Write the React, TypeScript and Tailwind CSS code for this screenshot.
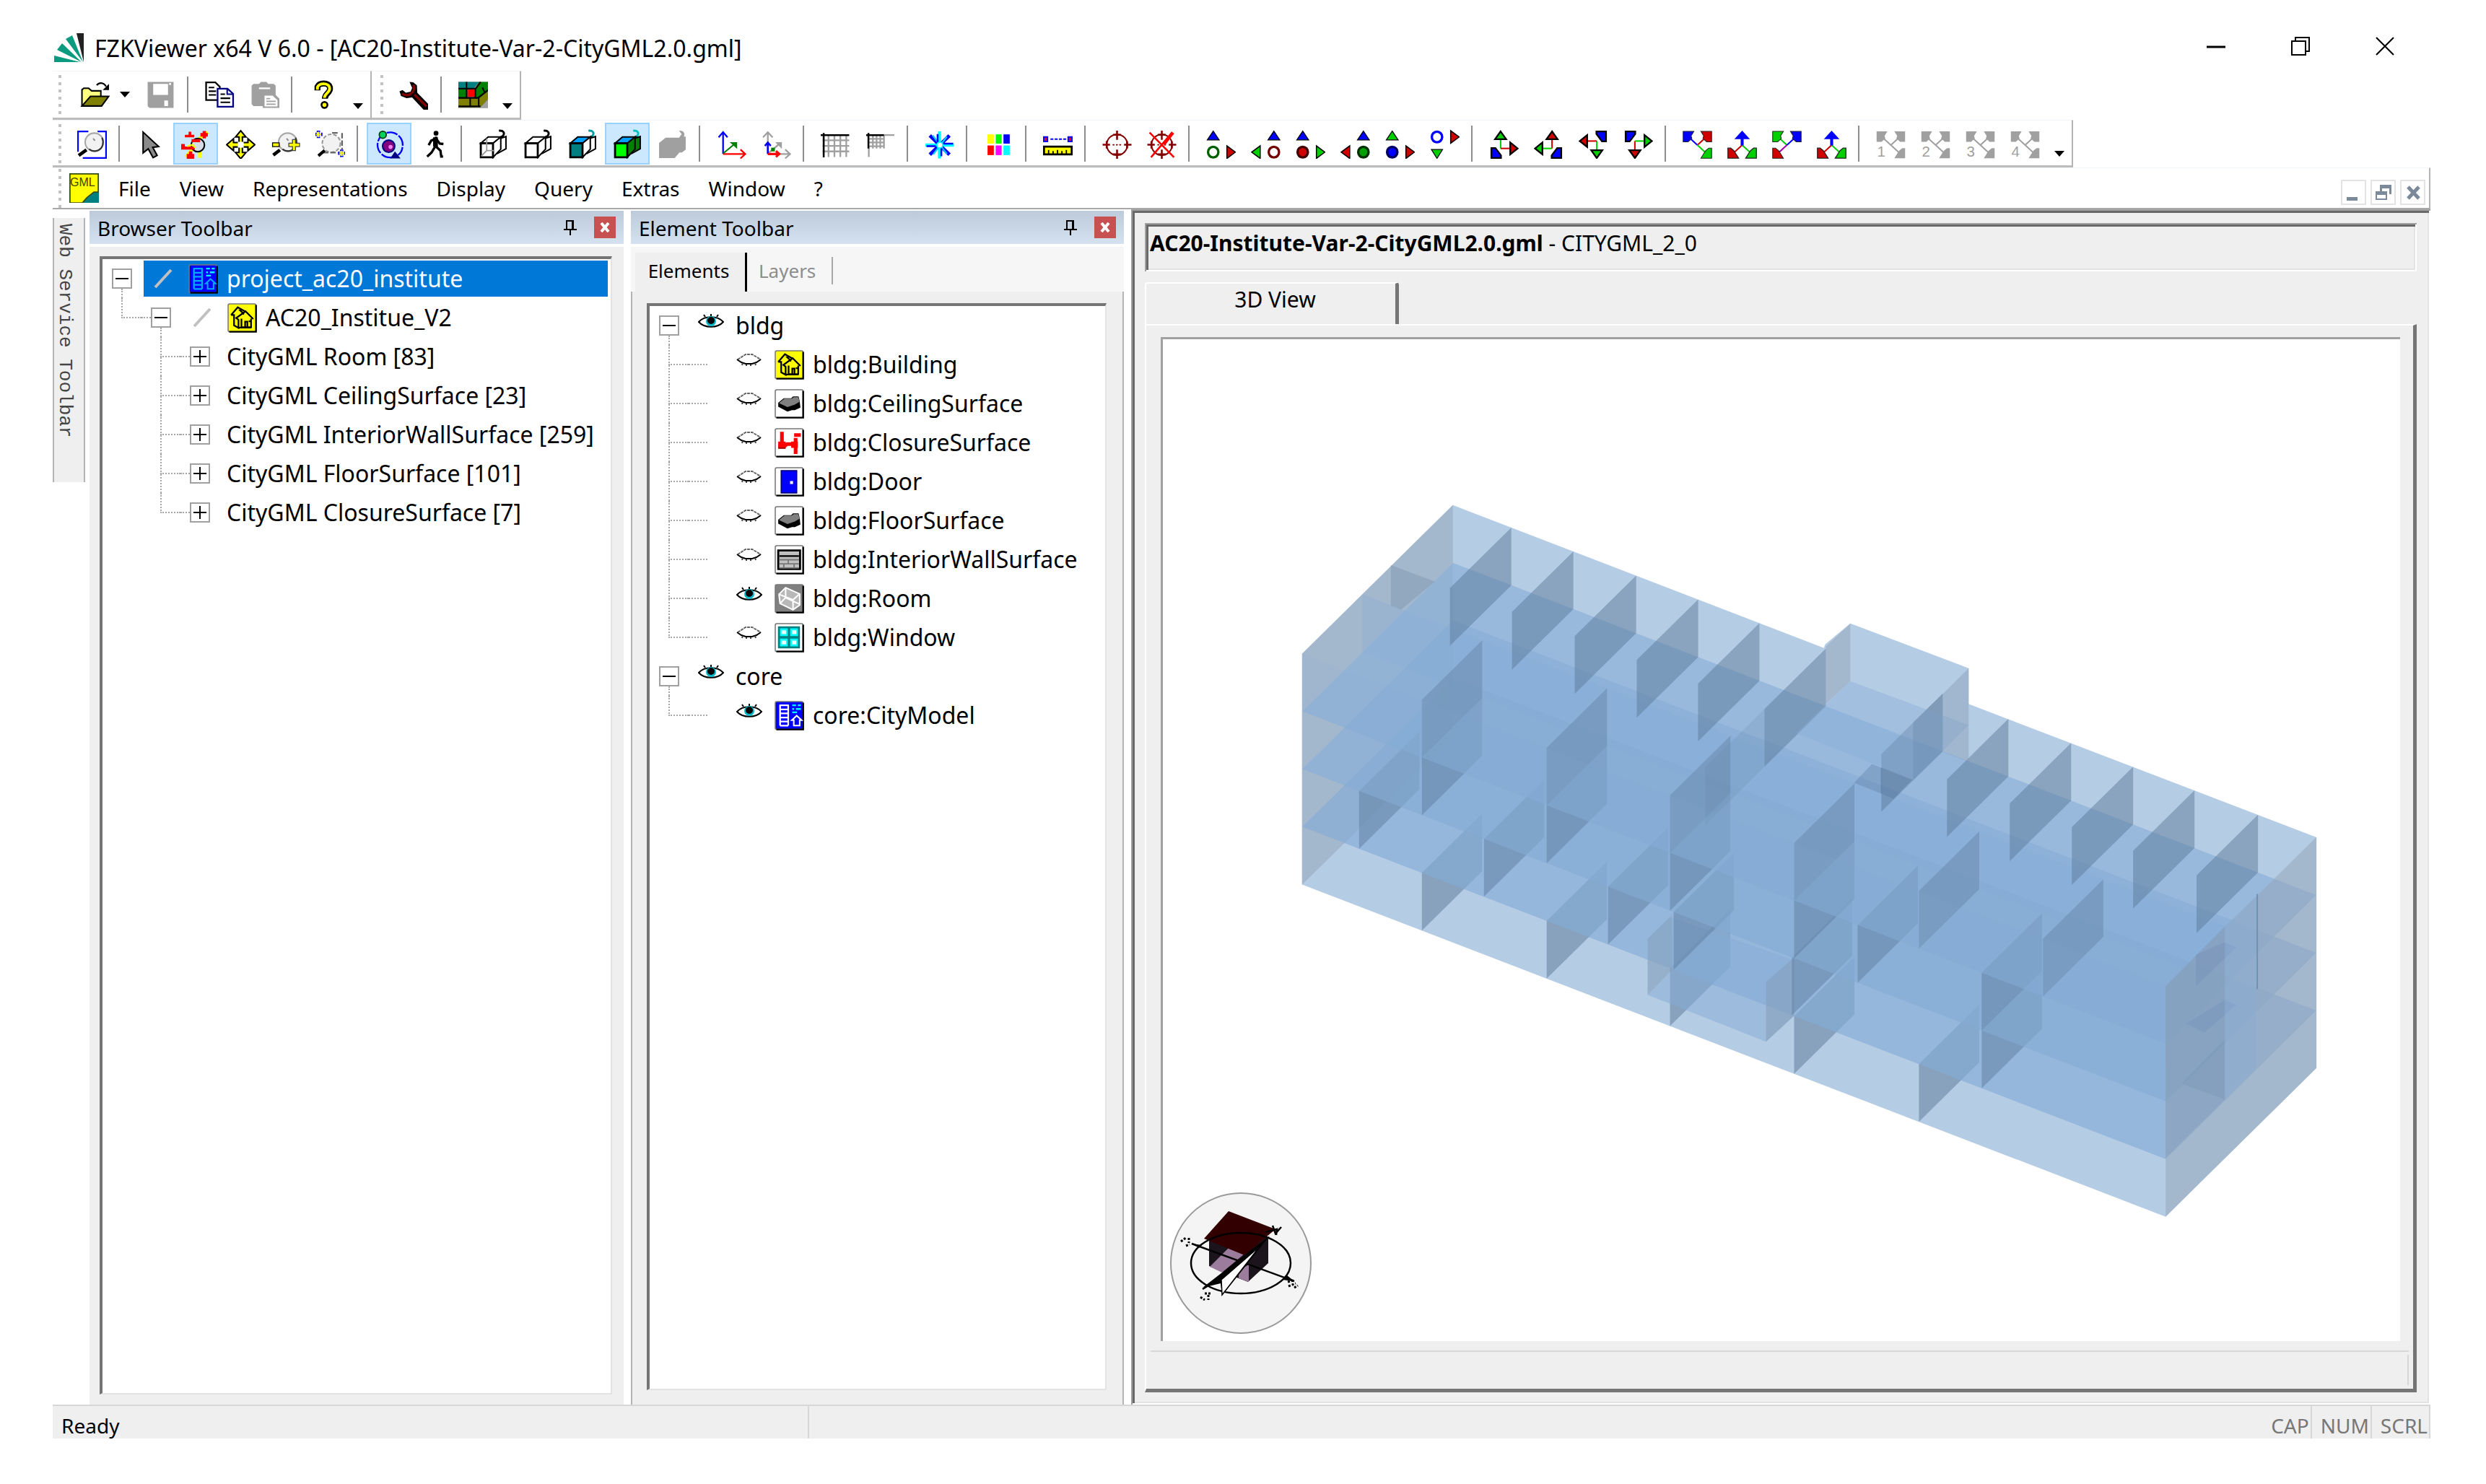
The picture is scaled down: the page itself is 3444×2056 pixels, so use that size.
import type { ReactNode } from "react";

const INK = "#000";
const GRAY = "#a0a0a0";

function Icon({ children }: { children: ReactNode }) {
  return (
    <svg width="41" height="41" viewBox="0 0 16 16" className="shrink-0" aria-hidden="true">
      {children}
    </svg>
  );
}

/* ---------- toolbar glyphs ---------- */

const openIcon = (
  <Icon>
    <path d="M1 14V5.2L2 4.4h2.6l1.6 1.4h5v3" fill="#ffff80" stroke={INK} strokeWidth="0.8" />
    <path d="M1 14l4.6-5.2h9.8L11.6 14z" fill="#808000" stroke={INK} strokeWidth="0.8" />
    <path d="M9 2.8C10 1.2 12.6 1 14 3.4" fill="none" stroke={INK} strokeWidth="0.9" />
    <path d="M15.6 2v3.4h-3.4z" fill={INK} />
  </Icon>
);
const saveIcon = (
  <Icon>
    <path d="M1 1h14v14H2l-1-1z" fill={GRAY} />
    <path d="M4 2h8v6H4zM12.6 1.6h1v1h-1zM10 11h2v3h-2z" fill="#fff" />
  </Icon>
);
const copyIcon = (
  <Icon>
    <path d="M.6 1.2h5L8 3.6v7.2H.6z" fill="#fff" stroke={INK} strokeWidth="0.9" />
    <path d="M2 4h3M2 6h4M2 8h4" stroke={INK} strokeWidth="0.8" />
    <path d="M6.8 4.6h5.4l3 2.8v7H6.8z" fill="#fff" stroke="#000080" strokeWidth="0.9" />
    <path d="M12 4.6v3h3" fill="none" stroke="#000080" strokeWidth="0.8" />
    <path d="M8.4 7.6h2.4M8.4 9.8h5.2M8.4 12h5.2" stroke={INK} strokeWidth="0.8" />
  </Icon>
);
const pasteIcon = (
  <Icon>
    <path d="M1 3l1-1h3l1-1h3l1 1h3l1 1v5l2 2v5H7v-1H2l-1-1z" fill={GRAY} />
    <path d="M5 4h6v.9H5zM8 8.4h4.4l2.6 2.4v3.4H8z" fill="#fff" />
    <path d="M9 10h2M9 11.5h5M9 13h5" stroke={GRAY} strokeWidth="0.7" />
  </Icon>
);
const helpIcon = (
  <Icon>
    <path d="M4.6 5.6V3.6C5.2 2.2 6.6 1.8 8 1.8s3.4.6 3.4 2.8c0 2.4-2.8 2.6-2.8 5.4" fill="none" stroke={INK} strokeWidth="3.2" />
    <path d="M4.6 5.2V3.8C5.2 2.4 6.6 2 8 2s3.2.6 3.2 2.6c0 2.4-2.8 2.6-2.8 5" fill="none" stroke="#ff0" strokeWidth="1.5" />
    <circle cx="8.4" cy="13.4" r="1.6" fill="#ff0" stroke={INK} strokeWidth="1" />
  </Icon>
);
const wrenchIcon = (
  <Icon>
    <path d="M5.6 1l2 .2 2 1.6.2 4 5.8 6V16h-2.4L7 9.4l-3 .4-3-1.2L.2 6l1.6-.6 1.8 1.4 2.6-.6.8-2z" fill={INK} />
    <path d="M8.2 7.8l6.6 6.4M1.6 7.2c1.2 1 2.8 1.2 4.4.4l1.4-1.2c.8-1.4.8-2.8.2-3.8" fill="none" stroke="#800000" strokeWidth="1.3" />
  </Icon>
);
const bricksIcon = (
  <Icon>
    <path d="M0 1h16v14H0z" fill="#808080" />
    <path d="M0 1h11l-3 4H0z" fill="#008080" />
    <path d="M11 1h5v5l-5 5-2-1V5z" fill="#008000" />
    <path d="M0 5h5v5H0z" fill="#008000" />
    <path d="M5.2 5h3.6v4H5.2z" fill="#f00" />
    <path d="M0 10h11l5-4v4l-4 4.6H0z" fill="#808000" />
    <path d="M0 4.6h9.4L12 1M4.4 1v9M9.2 4.6v5M0 9.6h10.6L16 5.4M6.4 10v4.4M11 9.6v4.8M0 14.2h12M13 4l1.4 3" fill="none" stroke={INK} strokeWidth="0.8" />
    <path d="M16 10.6V15h-4.4z" fill="#a0a0a0" />
  </Icon>
);

const lens = (
  <>
    <circle cx="9.2" cy="7" r="4.9" fill="#f2f2f2" stroke="#a8a8a8" strokeWidth="0.8" />
    <path d="M13.4 4.6c1.2 2.6.4 5.6-2 6.8-1.8.8-3.4.6-5-.6" fill="none" stroke="#333" strokeWidth="0.8" />
    <path d="M8.6 5l1 1.2" stroke="#888" strokeWidth="0.7" />
  </>
);
const fitIcon = (
  <Icon>
    <path d="M6 1.2H.4v11M11 1.2h4.6v14.4H3" fill="none" stroke="#00f" strokeWidth="0.9" />
    {lens}
    <path d="M5 11.2L.8 14.2" stroke={INK} strokeWidth="1.8" />
  </Icon>
);
const pointerIcon = (
  <Icon>
    <path d="M3.6 1.6v11.2l2.8-2.2 2.6 4.8 2.2-1.2-2.4-4.4 3.2-.4z" fill="#8a8a8a" stroke={INK} strokeWidth="0.8" />
  </Icon>
);
const moveLensIcon = (
  <Icon>
    <path d="M9 5.6l5.4-4M2.6 15l4-5M10 12v3.4" stroke="#ff0" strokeWidth="1.8" />
    <circle cx="9" cy="8.6" r="3.6" fill="#d4dde6" stroke={INK} strokeWidth="0.8" />
    <path d="M2 3h5v1.4H2zM4 1.4h1.4v3H4zM10.4 2h4v2h-4zM11.6 1h1.8v4h-1.8zM5.6 5.4h4.6V7H5.6zM0 8h2v3H0zM1.4 9.4h6V11h-6zM3 13.4h4V16H3zM4.2 12H6v2H4.2z" fill="#f00" />
    <path d="M3.2 9.2l3-.8 1.4 1.6" fill="none" stroke="#ff0" strokeWidth="0.9" />
  </Icon>
);
const panIcon = (
  <Icon>
    <path d="M8 .8l2.8 3.4H8.9v3h3v-2L15.6 8.4l-3.7 3.2v-2h-3v3h1.9L8 16l-2.8-3.4h1.9v-3h-3v2L.4 8.4l3.7-3.2v2h3v-3H5.2z" fill="#ff0" stroke={INK} strokeWidth="0.8" />
    <path d="M6.4 6.8h3.2V10H6.4z" fill="#fff" />
  </Icon>
);
const zoomIcon = (
  <Icon>
    {lens}
    <path d="M5 11.2L1.4 14" stroke={INK} strokeWidth="1.8" />
    <path d="M1 7.4h3.6v2H1z" fill="#ff0" stroke={INK} strokeWidth="0.5" />
    <path d="M11.8 5.6h1.6v2h2.2v1.8h-2.2v2.2h-1.6V9.4H9.8V7.6h2z" fill="#ff0" stroke="#444" strokeWidth="0.5" />
  </Icon>
);
const zoomWindowIcon = (
  <Icon>
    <circle cx="8.6" cy="7.6" r="4.9" fill="#f2f2f2" stroke="#999" strokeWidth="0.8" strokeDasharray="2 1" />
    <path d="M9 2h4M14.4 2v9M4 12.6h8" stroke="#666" strokeWidth="0.9" strokeDasharray="3 1" />
    <path d="M5 11.4L1.6 14.4" stroke={INK} strokeWidth="1.6" />
    <path d="M1.6.8v4M-.2 2.8h4M14.2 11v4M12.2 13h4" stroke="#00f" strokeWidth="1.8" strokeDasharray="0.9 0.7" />
    <path d="M1.6 1.4v2.8M.4 2.8H3M14.2 11.6v2.8M13 13h2.6" stroke="#ff0" strokeWidth="0.8" />
  </Icon>
);
const orbitIcon = (
  <Icon>
    <path d="M9.4 15.2A6.8 6.8 0 1 1 15 10c-.2 2-1 3-2.4 4" fill="none" stroke="#00f" strokeWidth="0.9" strokeDasharray="6 0.8" />
    <circle cx="7.6" cy="9.2" r="3.3" fill="#800080" stroke="#000080" strokeWidth="0.8" />
    <circle cx="8.6" cy="9.6" r="1.1" fill="#f080f0" />
    <circle cx="4.4" cy="3" r="1.9" fill="#00d060" stroke="#004000" strokeWidth="0.7" />
    <path d="M11 12l3 3.8H8.4z" fill="#000080" />
  </Icon>
);
const walkIcon = (
  <Icon>
    <circle cx="9" cy="2.2" r="1.3" fill={INK} />
    <path d="M9 4v5.4l2.4 2.2.4 3.2h1M8.6 9.2l-2 3.4-2.4 2.2M5 8.6l1.4-2.4L9 5l2 2.8 2 .2" fill="none" stroke={INK} strokeWidth="1.3" />
    <path d="M7.4 4.4h2.6v5H7.4z" fill={INK} />
  </Icon>
);

function Cube({ front, top, side, far, wire }: { front: string; top: string; side: string; far: string; wire?: boolean }) {
  return (
    <Icon>
      <path d="M11 .8c2.4-.2 3.4 1.2 2.2 2.8l-1 .8" fill="none" stroke={far} strokeWidth="1.1" />
      <path d="M10.4 5.4l4.4-1.4v6.6L10.4 13z" fill={side} stroke={INK} strokeWidth="0.8" />
      <path d="M1.2 7.6l4-3.4h7L7.8 7.6z" fill={top} stroke={INK} strokeWidth="0.8" />
      <path d="M7.8 7.6l4.2-3.4v6.6l-4.2 4.4z" fill={side} stroke={INK} strokeWidth="0.8" />
      <path d="M1.2 7.6h6.6v7.6H1.2z" fill={front} stroke={INK} strokeWidth="1.1" />
      {wire && <path d="M4.4 5v6.6h4M4.4 11.6l-3 3" fill="none" stroke="#999" strokeWidth="0.7" />}
    </Icon>
  );
}
const solidCubeIcon = (
  <Icon>
    <path d="M11.6.8c2.6-.2 3.4 1.6 2.6 3.2h1v7l-2 1.6h-1.4l-2.6 3H.8V7.4L4.4 4.6h7.2l1.4-2z" fill={GRAY} />
  </Icon>
);

const axesIcon = (
  <Icon>
    <path d="M3.4 13.4V2M1 4.4l2.4-2.8 2.4 2.8" fill="none" stroke="#00f" strokeWidth="0.9" />
    <path d="M3.4 13.4h12M12.8 11l2.6 2.4-2.6 2.4" fill="none" stroke="#f00" strokeWidth="0.9" />
    <path d="M3.6 13l6-5" stroke="#008000" strokeWidth="0.8" />
    <path d="M7 7h4v3.6z" fill="#008000" />
  </Icon>
);
const axesGrayIcon = (
  <Icon>
    <path d="M3.4 13.4V2M.8 4.4l2.6-2.8L6 4.4M3.4 13.4h12M12.8 11l2.6 2.4-2.6 2.4M3.6 13l6-5" fill="none" stroke={GRAY} strokeWidth="0.9" />
    <path d="M7.4 7h3.6v3.6z" fill={GRAY} />
    <path d="M3.4 13.4V7M1.8 9l1.6-1.8L5 9" fill="none" stroke="#00f" strokeWidth="1" />
    <path d="M3.4 13.4h6.4M7.8 11.8l1.8 1.6-1.8 1.6" fill="none" stroke="#f00" strokeWidth="1.2" />
    <path d="M5.2 10h2v2h-2z" fill="#008000" />
  </Icon>
);
const gridIcon = (
  <Icon>
    <path d="M4.2 3v12M7.4 3v12M10.6 3v12M13.8 3v12M1 6h14.4M1 9h14.4M1 12h14.4" stroke={GRAY} strokeWidth="0.9" />
    <path d="M0 3.2h15.4M1.6 2v13.2" stroke={INK} strokeWidth="1" />
  </Icon>
);
const gridCornerIcon = (
  <Icon>
    <path d="M4 3v7.4M6 3v7.4M8 3v7.4M10 3v7.4M1.6 5.2h8.6M1.6 7.2h8.6M1.6 9.2h8.6M1.8 10v5M10 3.2h5.6" stroke={GRAY} strokeWidth="0.9" />
    <path d="M.4 3.2H10M1.6 2v8.4" stroke={INK} strokeWidth="1" />
  </Icon>
);
const starIcon = (
  <Icon>
    <path d="M8 1.2v14.6M.4 8.6h15.4" stroke="#0ff" strokeWidth="1.7" />
    <path d="M2.8 3.4l10.6 10.4M13.4 3.4L2.8 13.8" stroke="#00f" strokeWidth="1.9" />
    <path d="M4.4 3.4l7.6 10M12 4L4.6 13.6" stroke="#0cf" strokeWidth="0.9" />
    <path d="M7 2.6v4.6M9 10v4.6M1 9.2h5M10 7.8h5.4" stroke="#00f" strokeWidth="1" />
    <circle cx="8.2" cy="8.6" r="1.6" fill="#fff" stroke="#0ff" strokeWidth="0.7" />
  </Icon>
);
const paletteIcon = (
  <Icon>
    <path d="M2 2.8h3.4v5H2z" fill="#ff0" />
    <path d="M6.4 2.8h3.2v5H6.4z" fill="#0f0" />
    <path d="M10.6 2.8H14v5h-3.4z" fill="#00f" />
    <path d="M2 8.8h3.4V14H2z" fill="#f00" />
    <path d="M6.4 8.8h3.2V14H6.4z" fill="#f0f" />
    <path d="M10.6 8.8H14V14h-3.4z" fill="#0ff" />
  </Icon>
);
const measureIcon = (
  <Icon>
    <path d="M.4 4.2h2v2.4h-2zM13.6 4.2h2v2.4h-2z" fill="#f00" stroke="#00f" strokeWidth="0.8" />
    <path d="M4 5.4h9" stroke="#00f" strokeWidth="0.8" strokeDasharray="1.6 0.7" />
    <path d="M.5 9.4h15v4.2H.5z" fill="#ff0" stroke={INK} strokeWidth="1.1" />
    <path d="M3 13.4v-2.2M5.4 13.4v-1.6M7.8 13.4v-2.2M10.2 13.4v-1.6M12.6 13.4v-2.2" stroke={INK} strokeWidth="0.7" />
  </Icon>
);
const target = (
  <>
    <circle cx="8" cy="8.4" r="5.6" fill="none" stroke="#800000" strokeWidth="0.8" />
    <path d="M8 .8v5M8 11v5M5.8 3h4.4M5.8 13.6h4.4M.2 8.4h4M11.8 8.4h4M2.4 6.4v4M13.4 6.4v4" stroke="#800000" strokeWidth="1" />
    <path d="M5.6 8.4h5" stroke="#800000" strokeWidth="0.7" strokeDasharray="1 0.8" />
  </>
);
const targetIcon = <Icon>{target}</Icon>;
const targetOffIcon = (
  <Icon>
    {target}
    <path d="M1.4 1.8l13.2 13.4M13.6 1.8L2.2 15.2" stroke="#f00" strokeWidth="1" />
    <path d="M14 1.8L9 8.2" stroke="#f00" strokeWidth="1.8" />
  </Icon>
);

const GREEN = "#00d000";
const RED = "#d00000";
const BLUE = "#0000ff";

function Dots({ x, y, fill, ring, tipColor, flip }: { x: number; y: string; fill: string; ring: string; tipColor: string; flip?: boolean }) {
  return (
    <Icon>
      <path d={`M${x} 1l3.2 4.8h-6.4z`} fill={y} stroke={INK} strokeWidth="0.5" />
      <ellipse cx={x} cy="12.4" rx="2.8" ry="2.9" fill={fill} stroke={ring} strokeWidth="1.3" />
      <path d={flip ? "M5 9v6.8L.4 12.4z" : "M11.2 9v6.8l4.6-3.4z"} fill={tipColor} stroke={INK} strokeWidth="0.6" />
    </Icon>
  );
}

const viewDownIcon = (
  <Icon>
    <ellipse cx="3.8" cy="4.2" rx="2.8" ry="2.9" fill="#fff" stroke={BLUE} strokeWidth="1.3" />
    <path d="M11.2.8v6.8l4.6-3.4z" fill={RED} stroke={INK} strokeWidth="0.6" />
    <path d="M3.8 15.8L.8 11h6z" fill={GREEN} stroke={INK} strokeWidth="0.5" />
  </Icon>
);

function Tripod({ up, side, turn }: { up: string; side: string; turn?: string }) {
  return (
    <Icon>
      <g transform={turn}>
        <path d="M6.2 5v5.4" stroke={up} strokeWidth="0.8" />
        <path d="M6.2 10.4h5.4" stroke={side} strokeWidth="0.8" />
        <path d="M6.2 1.2l3 4.2h-6z" fill={up} stroke={INK} strokeWidth="0.9" />
        <path d="M11.4 7.2v6.4l4-3.2z" fill={side} stroke={INK} strokeWidth="0.9" />
        <path d="M1.2 10.2h2.2l3 4v1.4H1.2z" fill={BLUE} stroke={INK} strokeWidth="0.9" />
      </g>
    </Icon>
  );
}

const NW = "M.3 1.2h5.8L4.6 3.6 5 5 3 6.8H.3z";
const NE = "M15.7 1.2H9.9l1.5 2.4L11 5l2 1.8h2.7z";
const SE = "M15.7 15.7H9.9l1.5-2.4 1.2-1.8 1.6-1.3h1.5z";
const SW = "M.3 15.7h5.8l-1.5-2.4-1.2-1.8-1.6-1.3H.3z";

function Corners({ nw, ne, se, sw }: { nw?: string; ne?: string; se?: string; sw?: string }) {
  return (
    <Icon>
      {nw && <path d="M3 4l5 4.6" stroke={nw} strokeWidth="0.8" />}
      {ne && <path d="M13 4L8 8.6" stroke={ne} strokeWidth="0.8" />}
      {se && <path d="M8 8.6l5 4.6" stroke={se} strokeWidth="0.8" />}
      {sw && <path d="M8 8.6l-5 4.6" stroke="#a000a0" strokeWidth="0.8" />}
      {nw && <path d={NW} fill={nw} stroke="#222" strokeWidth="0.4" />}
      {ne && <path d={NE} fill={ne} stroke="#222" strokeWidth="0.4" />}
      {se && <path d={SE} fill={se} stroke="#222" strokeWidth="0.4" />}
      {sw && <path d={SW} fill={sw} stroke="#222" strokeWidth="0.4" />}
    </Icon>
  );
}
const isoIcon = (
  <Icon>
    <path d="M8 8.6l-5 4.6" stroke={RED} strokeWidth="0.8" />
    <path d="M8 8.6l5 4.6" stroke={GREEN} strokeWidth="0.8" />
    <path d="M8 .8l4.2 4.6H8.8v3.4H7.2V5.4H3.8z" fill={BLUE} />
    <path d={SW} fill={RED} stroke="#222" strokeWidth="0.5" />
    <path d={SE} fill={GREEN} stroke="#222" strokeWidth="0.5" />
  </Icon>
);
function SavedView({ n }: { n: number }) {
  return (
    <Icon>
      <path d="M3 4l10 9.2M13 4L8 8.6" stroke={GRAY} strokeWidth="0.8" />
      <path d={NW} fill={GRAY} />
      <path d={NE} fill={GRAY} />
      <path d={SE} fill={GRAY} />
      <text x="0.6" y="15" fontSize="8" fill={GRAY} fontFamily="Liberation Sans, sans-serif">
        {n}
      </text>
    </Icon>
  );
}

type Tool = { label: string; icon: ReactNode; on?: boolean };

const viewGroups: Tool[][] = [
  [{ label: "Zoom all", icon: fitIcon }],
  [
    { label: "Select", icon: pointerIcon },
    { label: "Navigate", icon: moveLensIcon, on: true },
    { label: "Pan", icon: panIcon },
    { label: "Zoom", icon: zoomIcon },
    { label: "Zoom window", icon: zoomWindowIcon },
  ],
  [
    { label: "Orbit", icon: orbitIcon, on: true },
    { label: "Walk", icon: walkIcon },
  ],
  [
    { label: "Wireframe", icon: <Cube front="#fff" top="#fff" side="#fff" far="#000" wire /> },
    { label: "Hidden line", icon: <Cube front="#fff" top="#fff" side="#fff" far="#000" /> },
    { label: "Shaded edges", icon: <Cube front="#008080" top="#00a0ff" side="#fff" far="#00a0a0" /> },
    { label: "Shaded", icon: <Cube front="#00ff00" top="#00a0ff" side="#008000" far="#00c0c0" />, on: true },
    { label: "Solid", icon: solidCubeIcon },
  ],
  [
    { label: "Axes", icon: axesIcon },
    { label: "Local axes", icon: axesGrayIcon },
  ],
  [
    { label: "Grid", icon: gridIcon },
    { label: "Local grid", icon: gridCornerIcon },
  ],
  [{ label: "North", icon: starIcon }],
  [{ label: "Colors", icon: paletteIcon }],
  [{ label: "Measure", icon: measureIcon }],
  [
    { label: "Set target", icon: targetIcon },
    { label: "Clear target", icon: targetOffIcon },
  ],
  [
    { label: "Front", icon: <Dots x={3.8} y={BLUE} fill="#fff" ring="#006000" tipColor={RED} /> },
    { label: "Right", icon: <Dots x={12.4} y={BLUE} fill="#fff" ring="#700000" tipColor={GREEN} flip /> },
    { label: "Left", icon: <Dots x={3.8} y={BLUE} fill={RED} ring="#400000" tipColor={GREEN} /> },
    { label: "Back", icon: <Dots x={12.4} y={BLUE} fill="#00a000" ring="#003000" tipColor={RED} flip /> },
    { label: "Top", icon: <Dots x={3.8} y={GREEN} fill={BLUE} ring="#000060" tipColor={RED} /> },
    { label: "Bottom", icon: viewDownIcon },
  ],
  [
    { label: "South west", icon: <Tripod up={GREEN} side={RED} /> },
    { label: "South east", icon: <Tripod up={RED} side={GREEN} turn="matrix(-1 0 0 1 16 0)" /> },
    { label: "North east", icon: <Tripod up={GREEN} side={RED} turn="rotate(180 8 8.4)" /> },
    { label: "North west", icon: <Tripod up={RED} side={GREEN} turn="matrix(1 0 0 -1 0 16.8)" /> },
  ],
  [
    { label: "Isometric 1", icon: <Corners nw={BLUE} ne={RED} se={GREEN} /> },
    { label: "Isometric 2", icon: isoIcon },
    { label: "Isometric 3", icon: <Corners nw={GREEN} ne={BLUE} sw={RED} /> },
    { label: "Isometric 4", icon: isoIcon },
  ],
  [1, 2, 3, 4].map((n) => ({ label: `Saved view ${n}`, icon: <SavedView n={n} /> })),
];

function Grip() {
  return (
    <span className="ml-2 flex h-full w-1 flex-col justify-center gap-[6px]">
      {[0, 1, 2, 3, 4, 5].map((i) => (
        <span key={i} className="h-1 w-1 bg-[#c3c3c3]" />
      ))}
    </span>
  );
}

function ToolButton({ tool }: { tool: Tool }) {
  const state = tool.on ? "border-2 border-[#99d1ff] bg-[#cce8ff]" : "";
  return (
    <button aria-label={tool.label} className={`flex h-[58px] w-[62px] shrink-0 items-center justify-center ${state}`}>
      {tool.icon}
    </button>
  );
}

function Separator() {
  return <span className="mr-3 ml-[6px] h-[50px] w-[2px] shrink-0 bg-[#8d8d8d]" />;
}

function Arrow() {
  return (
    <svg width="14" height="8" viewBox="0 0 14 8" aria-hidden="true">
      <path d="M0 0h14L7 8z" fill={INK} />
    </svg>
  );
}

function More({ label }: { label: string }) {
  return (
    <button aria-label={label} className="flex h-full items-end pr-[10px] pb-3 pl-[10px]">
      <Arrow />
    </button>
  );
}

/* ---------- tree glyphs ---------- */

function Tile({ bg, children }: { bg: string; children: ReactNode }) {
  return (
    <Icon>
      <rect x="0.4" y="0.4" width="15" height="15" rx="0.8" fill={bg} stroke="#777" strokeWidth="0.6" />
      <path d="M1 15.5h14.5V1" fill="none" stroke={INK} strokeWidth="0.9" />
      {children}
    </Icon>
  );
}
const houseTile = (
  <Tile bg="#ff0">
    <path d="M2 6.4l3.6-4.2 3.8 2.2M2 6.4h1.6V12L6 13.4V9l-1.2-1L9.8 4.4 14 8.6M7.6 8.4V13h5.2V8.4M5.4 13.2h7.4M9.6 13v-3h1.2v3M12 9.4v.8M6.2 3.2L9 6" fill="none" stroke={INK} strokeWidth="0.9" />
  </Tile>
);
const slabTile = (
  <Tile bg="#fff">
    <path d="M2 7.4l3-2.4h4l1-1h3l.6 2.4.4 3.6-3 1.4H9.4l-2.4.8L2 9.6z" fill={INK} />
    <path d="M2.4 7.6l3-2.4h4l1-.8h2.4l.8 2.4L11 8.4 7 9.8z" fill="#808080" />
  </Tile>
);
const closureTile = (
  <Tile bg="#fff">
    <path d="M4 2v7.4M2 9.6h3.6l1.2-.9h4.4M11.4 14V5.4M10.6 3.8h3.6" fill="none" stroke="#f00" strokeWidth="2" />
    <path d="M2 9h4M9 9h3.6" stroke="#f00" strokeWidth="3.4" />
    <path d="M2 10.9h4" stroke="#900" strokeWidth="0.7" />
  </Tile>
);
const doorTile = (
  <Tile bg="#fff">
    <path d="M3.6 2h8.4v12H3.6z" fill="#00f" stroke="#000080" strokeWidth="0.6" />
    <path d="M8.4 7.6H10v1.6H8.4z" fill="#fff" />
  </Tile>
);
const wallTile = (
  <Tile bg="#fff">
    <path d="M2 3h11.8v10H2z" fill="#c0c0c0" stroke={INK} strokeWidth="1.1" />
    <path d="M2.6 6h10.6" stroke={INK} strokeWidth="0.9" />
    <path d="M2.6 8h10.6M2.6 10.2h10.6M7.4 8v2.2M5 10.4v2M10.6 10.4v2M2.6 12.4h10.6" stroke="#777" strokeWidth="0.7" />
  </Tile>
);
const roomTile = (
  <Tile bg="#808080">
    <path d="M2.4 5.6L6 2l7.6 3.4v6L10 14 3 10.6z" fill="#b8b8b8" stroke="#fff" strokeWidth="0.8" />
    <path d="M6 2v5.4L3 10.6M6 7.4l7.6 3.6M2.4 5.6l7.6 3V14M10 8.6l3.6-3.2" fill="none" stroke="#fff" strokeWidth="0.8" />
  </Tile>
);
const windowTile = (
  <Tile bg="#fff">
    <path d="M2.4 2.4h10.8v10.8H2.4z" fill="#0ff" stroke="#008080" strokeWidth="1.1" />
    <path d="M7.8 2.4v10.8M2.4 7.8h10.8" stroke="#008080" strokeWidth="1.3" />
    <path d="M3.8 4h2.4v2H3.8zM9.4 4h2.4v2H9.4zM3.8 9.6h2.4v2H3.8zM9.4 9.6h2.4v2H9.4z" fill="#e8ffff" />
  </Tile>
);
function CityTile({ line }: { line: string }) {
  return (
    <Tile bg="#00f">
      <path d="M3 2v11.4M7.4 2v11.4M3 2.4h4.4M3 4.6h4.4M3 6.8h4.4M3 9h4.4M3 11.2h4.4M3 13.4h4.4" fill="none" stroke={line} strokeWidth="0.9" />
      <path d="M9.6 2.4h2M12.6 2.4h1.6M9.6 4.4h1M11.6 4.4h2.6M9.6 6.2h2.6" stroke="#0ff" strokeWidth="0.9" />
      <path d="M12 8l2.6 2.4h-1v3h-3.2v-3h-1z" fill="none" stroke={line} strokeWidth="0.8" />
    </Tile>
  );
}

function Eye({ open }: { open?: boolean }) {
  return (
    <button aria-label={open ? "Hide" : "Show"} className="mb-3 h-5 w-[36px] shrink-0">
      <svg width="36" height="20" viewBox="0 0 36 20" aria-hidden="true">
        {open ? (
          <>
            <path d="M1 11C9 2 27 2 35 11 27 20 9 20 1 11z" fill="#fff" stroke={INK} strokeWidth="2" />
            <circle cx="18" cy="10" r="7" fill="#00b8c8" />
            <circle cx="18" cy="9" r="5" fill={INK} />
            <path d="M10 4L8 1M18 3V0M26 4l2-3" stroke={INK} strokeWidth="2" />
          </>
        ) : (
          <>
            <path d="M2 9L13 2h9l12 7" fill="none" stroke="#666" strokeWidth="2" strokeDasharray="4 1" />
            <path d="M1 9l6 4 6 2h9l6-2 6-4" fill="none" stroke={INK} strokeWidth="2" />
            <path d="M9 14l-1 3M14 16v2M20 16v2M26 14l1 3" stroke="#444" strokeWidth="2" />
          </>
        )}
      </svg>
    </button>
  );
}

function Slash() {
  return (
    <svg width="26" height="28" viewBox="0 0 26 28" className="shrink-0" aria-hidden="true">
      <path d="M2 26L24 2" stroke="#c0c0c0" strokeWidth="4" />
    </svg>
  );
}

/* box with + or -, and the dotted lines that run into it */
function Toggle({ open, child, below }: { open?: boolean; child?: boolean; below?: boolean }) {
  return (
    <span className="flex h-[54px] w-[54px] shrink-0 items-center">
      <span className={`w-[13px] ${child ? "border-t-2 border-dotted border-[#a8a8a8]" : ""}`} />
      <span className="flex h-full flex-col items-center">
        <span className="h-[13px]" />
        <button
          aria-label={open ? "Collapse" : "Expand"}
          className="flex h-7 w-7 items-center justify-center border-2 border-[#a0a0a0] bg-white"
        >
          <svg width="18" height="18" viewBox="0 0 18 18" aria-hidden="true">
            <path d={open ? "M0 9h18" : "M0 9h18M9 0v18"} stroke={INK} strokeWidth="2" />
          </svg>
        </button>
        <span className={`h-[13px] ${below ? "border-l-2 border-dotted border-[#a8a8a8]" : ""}`} />
      </span>
    </span>
  );
}

function Branch({ last }: { last?: boolean }) {
  return (
    <span className="flex h-[54px] w-[54px] shrink-0">
      <span className="w-[26px]" />
      <span className="flex flex-1 flex-col">
        <span className="h-7 border-b-2 border-l-2 border-dotted border-[#a8a8a8]" />
        {!last && <span className="h-[26px] border-l-2 border-dotted border-[#a8a8a8]" />}
      </span>
    </span>
  );
}

const cityObjects = [
  "CityGML Room [83]",
  "CityGML CeilingSurface [23]",
  "CityGML InteriorWallSurface [259]",
  "CityGML FloorSurface [101]",
  "CityGML ClosureSurface [7]",
];

const bldgElements = [
  { name: "bldg:Building", tile: houseTile },
  { name: "bldg:CeilingSurface", tile: slabTile },
  { name: "bldg:ClosureSurface", tile: closureTile },
  { name: "bldg:Door", tile: doorTile },
  { name: "bldg:FloorSurface", tile: slabTile },
  { name: "bldg:InteriorWallSurface", tile: wallTile },
  { name: "bldg:Room", tile: roomTile, visible: true },
  { name: "bldg:Window", tile: windowTile },
];

function PanelHeader({ title }: { title: string }) {
  return (
    <div className="flex h-[46px] shrink-0 items-center bg-linear-to-b from-[#bccad9] to-[#d4e2f0] pr-[11px] pl-[11px]">
      <h2 className="flex-1 pt-[2px] text-[28px] leading-9">{title}</h2>
      <button aria-label="Pin" className="mr-6">
        <svg width="18" height="22" viewBox="0 0 18 22" aria-hidden="true">
          <path d="M4 14V2h9v12M0 14h18M9 14v8" fill="none" stroke={INK} strokeWidth="2" />
          <path d="M11 2h3v12h-3z" fill={INK} />
        </svg>
      </button>
      <button aria-label={`Close ${title}`} className="flex h-[30px] w-[30px] items-center justify-center bg-[#c75050]">
        <svg width="14" height="14" viewBox="0 0 14 14" aria-hidden="true">
          <path d="M2 1l10 12M12 1L2 13" stroke="#fff" strokeWidth="4" />
        </svg>
      </button>
    </div>
  );
}

const sunken = "border-t-4 border-l-4 border-r-2 border-b-2 border-t-[#757575] border-l-[#757575] border-r-[#e3e3e3] border-b-[#e3e3e3] bg-white";

function BrowserPanel() {
  return (
    <section className="flex w-[740px] shrink-0 flex-col pt-[2px]">
      <PanelHeader title="Browser Toolbar" />
      <div className="mt-1 flex flex-1 flex-col bg-[#efefef] pt-[13px] pr-4 pb-[14px] pl-[14px]">
        <ul className={`flex-1 text-[32px] leading-10 ${sunken}`}>
          <li className="flex h-[54px] items-center">
            <Toggle open below />
            <a href="#project" className="mr-1 ml-[3px] flex h-[50px] flex-1 items-center bg-[#0078d7] pl-[14px] text-white">
              <Slash />
              <span className="mr-3 ml-[22px]">
                <CityTile line="#0af" />
              </span>
              project_ac20_institute
            </a>
          </li>
          <li className="flex h-[54px] items-center">
            <Branch last />
            <Toggle open child below />
            <span className="flex items-center pl-[17px]">
              <Slash />
              <span className="mr-3 ml-[22px]">{houseTile}</span>
              AC20_Institue_V2
            </span>
          </li>
          {cityObjects.map((name, i) => (
            <li key={name} className="flex h-[54px] items-center">
              <span className="w-[54px] shrink-0" />
              <Branch last={i === cityObjects.length - 1} />
              <Toggle child />
              <span className="pl-[10px]">{name}</span>
            </li>
          ))}
        </ul>
      </div>
    </section>
  );
}

function ElementRow({ name, tile, visible, last }: { name: string; tile: ReactNode; visible?: boolean; last?: boolean }) {
  return (
    <li className="flex h-[54px] items-center">
      <Branch last={last} />
      <span className="mr-10 w-[26px] border-t-2 border-dotted border-[#a8a8a8]" />
      <Eye open={visible} />
      <span className="mr-3 ml-[17px]">{tile}</span>
      {name}
    </li>
  );
}

function ElementPanel() {
  return (
    <section className="flex w-[683px] shrink-0 flex-col pt-[2px]">
      <PanelHeader title="Element Toolbar" />
      <div role="tablist" className="mt-1 flex h-[62px] shrink-0 items-end bg-[#f6f6f6] pl-[6px] text-[26px] leading-8">
        <button role="tab" aria-selected="true" className="h-[54px] w-[155px] border-r-[3px] border-black bg-[#efefef] pr-1 pb-1">
          Elements
        </button>
        <span className="flex h-[54px] items-center pb-1">
          <button role="tab" aria-selected="false" className="h-[38px] border-r-2 border-[#a8a8a8] pr-[22px] pl-4 text-[#8d8d8d]">
            Layers
          </button>
        </span>
      </div>
      <div className="flex flex-1 flex-col border-x-2 border-[#b4b4b4] bg-[#efefef] pt-4 pr-[22px] pb-5 pl-5">
        <ul className={`flex-1 text-[32px] leading-10 ${sunken}`}>
          <li className="flex h-[54px] items-center">
            <Toggle open below />
            <span className="ml-[13px] flex items-center gap-4">
              <Eye open />
              bldg
            </span>
          </li>
          {bldgElements.map((el, i) => (
            <ElementRow key={el.name} {...el} last={i === bldgElements.length - 1} />
          ))}
          <li className="flex h-[54px] items-center">
            <Toggle open below />
            <span className="ml-[13px] flex items-center gap-4">
              <Eye open />
              core
            </span>
          </li>
          <ElementRow name="core:CityModel" tile={<CityTile line="#fff" />} visible last />
        </ul>
      </div>
    </section>
  );
}

/* ---------- 3D model ---------- */

// x is the position along the front wall, v goes from front (0) to back (1), w is the storey
const X0 = 1805;
const X1 = 3002;
const SLOPE = 0.3847;
const STOREY = 80;
const DEPTH_X = 209;
const DEPTH_Y = -206;

function pt(x: number, v: number, w: number) {
  const px = x + v * DEPTH_X;
  const py = 905 + (x - X0) * SLOPE + v * DEPTH_Y + (4 - w) * STOREY;
  return `${px.toFixed(1)},${py.toFixed(1)}`;
}
function crossWall(x: number, v0: number, v1: number, w: number) {
  return [pt(x, v0, w), pt(x, v1, w), pt(x, v1, w + 1), pt(x, v0, w + 1)].join(" ");
}
function longWall(v: number, xa: number, xb: number, w: number) {
  return [pt(xa, v, w), pt(xb, v, w), pt(xb, v, w + 1), pt(xa, v, w + 1)].join(" ");
}
function plate(w: number) {
  return [pt(X0, 0, w), pt(X0, 1, w), pt(X1, 1, w), pt(X1, 0, w)].join(" ");
}

const WALL = "#577695";
const GABLE = "#93a4b5";
const GABLE_BARE = "#a4b8cd";
const FLOOR = "#86acd6";
const FACADE = "#b5cce5";

const frontWalls = [
  [1971, 2144, 2315, 2487, 2660],
  [1884, 2057, 2229, 2320, 2484, 2747],
  [1971, 2144, 2315, 2487, 2575, 2747],
  [1971, 2144, 2315, 2487, 2660, 2832],
];
const backWalls = [1886, 1972, 2059, 2145, 2230, 2322, 2484, 2575, 2662, 2748, 2833, 2921];

function Model() {
  return (
    <svg viewBox="1612 470 1715 1387" className="h-full w-full" role="img" aria-label="Room model">
      <polygon points="2530,892 2565,863 2729,925 2729,1004 2653,1080 2490,1010" fill={FACADE} />
      <polygon
        points={[pt(X0, 0, 0), pt(X0, 0, 4), pt(X0, 1, 4), "2531,898", "2565,943", "2693,961", pt(X1, 1, 4), pt(X1, 1, 0), pt(X1, 0, 0)].join(" ")}
        fill={FACADE}
      />
      <polygon points="2531,895 2565,863 2565,943 2531,975" fill={GABLE_BARE} />
      {[0, 1, 2, 3].map((w) => (
        <g key={w}>
          <polygon points={crossWall(X0, 0, 1, w)} fill={GABLE_BARE} fillOpacity={w === 3 || w === 0 ? 1 : 0.75} />
          {w === 3 && (
            <>
              <polygon points="1928,782 1989,805 1942,844 1928,838" fill={WALL} fillOpacity="0.25" />
              <polygon points={longWall(0.4, X0, X1, 3)} fill={FLOOR} fillOpacity="0.3" />
              <polygon points={crossWall(2322, 0.2, 0.593, 3)} fill={WALL} fillOpacity="0.14" />
              {backWalls.map((x) => (
                <polygon key={x} points={crossWall(x, 0.593, 1, 3)} fill={WALL} fillOpacity="0.46" />
              ))}
            </>
          )}
          {frontWalls[w].map((x) => (
            <polygon key={x} points={crossWall(x, 0, 0.4, w)} fill={WALL} fillOpacity={w === 3 ? 0.34 : 0.48} />
          ))}
          {w > 0 && <polygon points={longWall(0, X0, X1, w)} fill={FLOOR} fillOpacity="0.12" />}
          <polygon points={crossWall(X1, 0, 1, w)} fill={GABLE} fillOpacity="0.5" />
          {w < 3 && <polygon points={plate(w + 1)} fill={FLOOR} fillOpacity="0.6" />}
          {w === 0 && (
            <>
              <polygon points="2284,1378 2448,1443 2487,1407 2487,1330 2315,1270 2284,1300" fill={FLOOR} fillOpacity="0.5" />
              <polygon points="2284,1300 2318,1267 2318,1343 2284,1378" fill="#8a9aaa" fillOpacity="0.35" />
              <polygon points="2448,1360 2487,1326 2487,1407 2448,1443" fill="#8096b0" fillOpacity="0.45" />
            </>
          )}
        </g>
      ))}
      {/* parts of the gables that no floor overlaps */}
      {[0, 1, 2].map((w) => (
        <polygon key={w} points={[pt(X0, 0, w), pt(X0, 0, w + 1), pt(X0, 0.279, w)].join(" ")} fill={GABLE_BARE} />
      ))}
      {[0, 1, 2, 3].map((w) => (
        <polygon key={w} points={[pt(X1, 1, w), pt(X1, 1, w + 1), pt(X1, 0.721, w + 1)].join(" ")} fill={GABLE_BARE} />
      ))}
      {/* stair tower and the shaft beside it */}
      <polygon points="2565,943 2729,1004 2653,1080 2490,1015" fill={FLOOR} fillOpacity="0.4" />
      <polygon points="2693,961 2729,925 2729,1055 2693,1041" fill="#8298b0" fillOpacity="0.4" />
      <polygon points="2652,1000 2693,961 2693,1041 2652,1080" fill={WALL} fillOpacity="0.2" />
      <polygon points="2570,1084 2595,1058 2650,1080 2625,1106" fill="#50709c" fillOpacity="0.3" />
      <polygon points="2607,1064 2609,1064 2609,1099 2607,1098" fill="#5f7fa8" fillOpacity="0.5" />
      {/* rooms at the right gable */}
      <polygon points="3002,1366 3084,1283 3084,1523 3002,1604" fill="#6f8fb4" fillOpacity="0.25" />
      <polygon points="3044,1322 3084,1305 3100,1312 3044,1366" fill="#5f7fa8" fillOpacity="0.2" />
      <polygon points="3030,1418 3084,1385 3100,1392 3056,1430" fill="#5f7fa8" fillOpacity="0.2" />
      <polygon points="3024,1501 3084,1440 3084,1523" fill="#5f7fa8" fillOpacity="0.15" />
      <polygon points="3084,1283 3127,1241 3127,1480 3084,1523" fill={FLOOR} fillOpacity="0.4" />
      <path d="M3129 1238v132" stroke="#6f8fb4" strokeWidth="2" />
    </svg>
  );
}

function Compass() {
  return (
    <svg width="200" height="200" viewBox="0 0 200 200" aria-label="Compass" role="img">
      <circle cx="100" cy="100" r="97" fill="#f4f4f4" stroke="#9a9a9a" strokeWidth="2" />
      <path d="M56 66v38l28 12 26 10 28-26V64z" fill="#1c141c" />
      <path d="M57 105l26-26 22 8-31 26zM97 110l14-8v24l-14-5z" fill="#9c7c9c" />
      <path d="M83 28l65 25-43 36-56-23z" fill="#330000" />
      <ellipse cx="100" cy="100" rx="69" ry="42" fill="none" stroke={INK} strokeWidth="2.5" />
      <path d="M32 73l142 52" stroke={INK} strokeWidth="2.5" />
      <path d="M32 73l14 2-4 4zM174 125l-16-2 6-6z" fill={INK} />
      <path d="M140 62L47 134l25-6 2 17z" fill={INK} />
      <path d="M126 77L74 144l-1-21z" fill="#fff" stroke={INK} strokeWidth="1.5" />
      <path d="M134 57l16-4-1 8M144 48l4 11 8-9" fill="none" stroke={INK} strokeWidth="2.5" />
      <path d="M47 136l26-16" stroke={INK} strokeWidth="2.5" />
      <path d="M17 70l8-6M24 76l5-2M28 65v7M166 132l10-4M174 134l5-3M165 126l8-2M44 147l6 4M50 142h8M55 144v7" stroke={INK} strokeWidth="3" strokeDasharray="3 2" />
    </svg>
  );
}

function DocumentWindow() {
  return (
    <main className="flex min-w-0 flex-1 flex-col bg-[#efefef] px-[19px] pt-[19px] pb-[17px] shadow-[inset_2px_2px_0_#a0a0a0,inset_-2px_-2px_0_#fff,inset_5px_5px_0_#696969,inset_-4px_-4px_0_#e3e3e3]">
      <div className="h-[67px] shrink-0 px-[7px] pt-[10px] text-[30px] leading-9 shadow-[inset_2px_2px_0_#a0a0a0,inset_-2px_-2px_0_#fff,inset_5px_5px_0_#696969,inset_-4px_-4px_0_#e3e3e3]">
        <b>AC20-Institute-Var-2-CityGML2.0.gml</b> - CITYGML_2_0
      </div>
      <div role="tablist" className="mt-[15px] flex shrink-0">
        <button
          role="tab"
          aria-selected="true"
          className="h-[58px] w-[352px] rounded-t-sm border-t-2 border-r-[5px] border-l-2 border-t-white border-r-[#757575] border-l-white pb-3 pl-3 text-[30px] leading-9"
        >
          3D View
        </button>
      </div>
      <div className="flex flex-1 flex-col border-t-2 border-r-[5px] border-b-[5px] border-l-2 border-t-white border-r-[#757575] border-b-[#757575] border-l-white pt-4">
        <div className="relative mr-[18px] ml-5 min-h-0 flex-1 border-t-[3px] border-l-[3px] border-[#a0a0a0] bg-white">
          <Model />
          <div className="absolute bottom-2 left-2">
            <Compass />
          </div>
        </div>
        <div className="mx-[6px] mt-[13px] h-[53px] shrink-0 border-t-2 border-[#d7d7d7] pt-1">
          <div className="h-[42px] border-r-2 border-[#d7d7d7]" />
        </div>
      </div>
    </main>
  );
}

const menus = ["File", "View", "Representations", "Display", "Query", "Extras", "Window", "?"];

export default function App() {
  return (
    <div className="flex h-screen flex-col bg-white pt-[30px] pr-[77px] pb-[63px] pl-[73px] font-['Noto_Sans','Open_Sans',sans-serif] text-black">
      <header className="flex h-[68px] shrink-0 items-center">
        <svg width="42" height="42" viewBox="0 0 42 42" className="mt-1 ml-[2px]" aria-hidden="true">
          <path d="M41 41L31 1h10z" fill="#222" />
          <path d="M40 41L16 9l9-5zM38 41L4 24l7-9zM36 41H0v-9z" fill="#0a9a80" />
        </svg>
        <h1 className="ml-[14px] flex-1 pt-[6px] text-[32px] leading-10">FZKViewer x64 V 6.0 - [AC20-Institute-Var-2-CityGML2.0.gml]</h1>
        <div className="mr-[50px] flex gap-[91px]">
          <button aria-label="Minimize">
            <svg width="26" height="26" viewBox="0 0 26 26" aria-hidden="true">
              <path d="M0 14h26" stroke={INK} strokeWidth="3" />
            </svg>
          </button>
          <button aria-label="Restore">
            <svg width="26" height="26" viewBox="0 0 26 26" aria-hidden="true">
              <path d="M1 6h19v19H1zM6 6V1h19v19h-5" fill="none" stroke={INK} strokeWidth="2" />
            </svg>
          </button>
          <button aria-label="Close">
            <svg width="26" height="26" viewBox="0 0 26 26" aria-hidden="true">
              <path d="M1 1l24 24M25 1L1 25" stroke={INK} strokeWidth="2" />
            </svg>
          </button>
        </div>
      </header>

      <div className="flex h-[68px] shrink-0">
        <div className="flex items-center border-t border-r-2 border-b-[3px] border-t-[#f0f5fa] border-r-[#b4b4b4] border-b-[#bcbcbc]">
          <Grip />
          <span className="w-[15px]" />
          <ToolButton tool={{ label: "Open", icon: openIcon }} />
          <button aria-label="Recent files" className="mr-[11px] pl-1">
            <Arrow />
          </button>
          <ToolButton tool={{ label: "Save", icon: saveIcon }} />
          <Separator />
          <ToolButton tool={{ label: "Copy", icon: copyIcon }} />
          <ToolButton tool={{ label: "Paste", icon: pasteIcon }} />
          <Separator />
          <ToolButton tool={{ label: "Help", icon: helpIcon }} />
          <More label="More file tools" />
        </div>
        <div className="flex items-center border-t border-r-2 border-b-[3px] border-t-[#f0f5fa] border-r-[#b4b4b4] border-b-[#bcbcbc] pl-1">
          <Grip />
          <span className="w-[11px]" />
          <ToolButton tool={{ label: "Settings", icon: wrenchIcon }} />
          <Separator />
          <ToolButton tool={{ label: "Materials", icon: bricksIcon }} />
          <More label="More settings" />
        </div>
      </div>

      <div className="flex h-[66px] shrink-0">
        <div className="flex items-center border-t border-r-2 border-b-[3px] border-t-[#f0f5fa] border-r-[#b4b4b4] border-b-[#bcbcbc] pt-[2px]">
          <Grip />
          <span className="w-[11px]" />
          {viewGroups.map((group, i) => (
            <div key={i} className="flex items-center">
              {i > 0 && <Separator />}
              {group.map((tool) => (
                <ToolButton key={tool.label} tool={tool} />
              ))}
            </div>
          ))}
          <More label="More view tools" />
        </div>
      </div>

      <nav className="flex h-[58px] shrink-0 items-center border-t border-r-2 border-b-2 border-t-[#f0f5fa] border-r-[#b4b4b4] border-b-[#a8a8a8]">
        <Grip />
        <svg width="41" height="41" viewBox="0 0 41 41" className="mr-[7px] ml-[11px]" aria-hidden="true">
          <path d="M0 0h41v41H0z" fill="#008080" />
          <path d="M1 1h39v25h-6l-10 8-6 7H1z" fill="#ff0" stroke="#404000" strokeWidth="1.5" />
          <text x="1" y="18" fontSize="16" fill="#404000" fontFamily="Liberation Sans, sans-serif">
            GML
          </text>
        </svg>
        <div className="flex flex-1 text-[28px] leading-9">
          {menus.map((name) => (
            <button key={name} className="px-5">
              {name}
            </button>
          ))}
        </div>
        <div className="mt-3 mr-[5px] flex gap-[6px]">
          <button aria-label="Minimize document" className="flex h-[35px] w-[35px] items-center justify-center border-2 border-[#e3e3e3]">
            <svg width="22" height="22" viewBox="0 0 22 22" aria-hidden="true">
              <path d="M1 17h15v5H1z" fill="#7a8a9a" />
            </svg>
          </button>
          <button aria-label="Restore document" className="flex h-[35px] w-[35px] items-center justify-center border-2 border-[#e3e3e3]">
            <svg width="22" height="22" viewBox="0 0 22 22" aria-hidden="true">
              <path d="M6 0h16v13h-3V5H9v4H6zM0 9h16v12H0zM2 14v5h12v-5z" fill="#7a8a9a" fillRule="evenodd" />
            </svg>
          </button>
          <button aria-label="Close document" className="flex h-[35px] w-[35px] items-center justify-center border-2 border-[#e3e3e3]">
            <svg width="22" height="22" viewBox="0 0 22 22" aria-hidden="true">
              <path d="M4 3l15 16M19 3L4 19" stroke="#7a8a9a" strokeWidth="5" />
            </svg>
          </button>
        </div>
      </nav>

      <div className="flex min-h-0 flex-1">
        <button className="mt-3 mr-[6px] flex h-[366px] w-[45px] shrink-0 items-center border-y-2 border-r-2 border-[#b4b4b4] bg-[#efefef] pt-2 pr-3 font-['Liberation_Mono',monospace] text-[26px] leading-8 text-[#444] [writing-mode:vertical-rl]">
          <span className="flex-1 text-left">Web Service Toolbar</span>
        </button>
        <BrowserPanel />
        <span className="w-[10px] shrink-0" />
        <ElementPanel />
        <span className="w-[10px] shrink-0" />
        <DocumentWindow />
      </div>

      <footer className="flex h-[47px] shrink-0 items-stretch border-t-2 border-[#d7d7d7] bg-[#efefef] text-[28px] leading-[54px]">
        <span className="w-[1048px] border-r-2 border-[#d7d7d7] pl-3">Ready</span>
        <span className="flex-1" />
        <span className="border-r-2 border-[#d7d7d7] pr-[2px] text-[#777]">CAP</span>
        <span className="border-r-2 border-[#d7d7d7] pr-[2px] pl-3 text-[#777]">NUM</span>
        <span className="border-r-2 border-[#d7d7d7] pr-[2px] pl-3 text-[#777]">SCRL</span>
      </footer>
    </div>
  );
}
